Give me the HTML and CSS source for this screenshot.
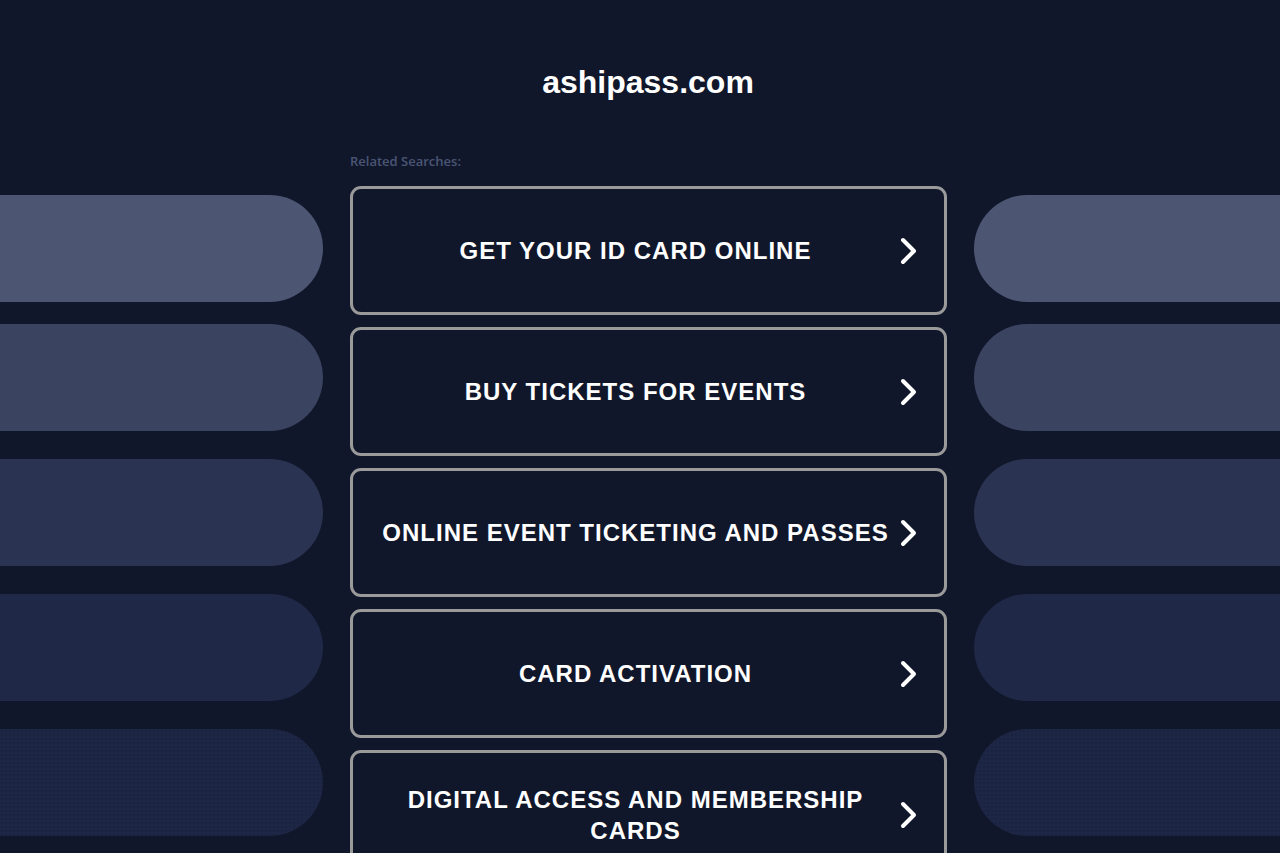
FILE: index.html
```html
<!DOCTYPE html>
<html lang="en">
<head>
<meta charset="utf-8">
<title>ashipass.com</title>
<link rel="stylesheet" href="styles.css">
</head>
<body>
<header class="header">
  <h1 class="domain">ashipass.com</h1>
</header>
<div class="layout">
  <div class="deco deco-left">
    <div class="pill pill-1"></div>
    <div class="pill pill-2"></div>
    <div class="pill pill-3"></div>
    <div class="pill pill-4"></div>
    <div class="pill pill-5"></div>
  </div>
  <main class="main">
    <div class="label">Related Searches:</div>
    <div class="links">
      <a class="link" href="#"><span class="link-text">GET YOUR ID CARD ONLINE</span><svg class="chev" viewBox="0 0 20 28" width="20" height="28"><polyline points="5,3 16,14 5,25" fill="none" stroke="#fff" stroke-width="4" stroke-linecap="round" stroke-linejoin="round"/></svg></a>
      <a class="link" href="#"><span class="link-text">BUY TICKETS FOR EVENTS</span><svg class="chev" viewBox="0 0 20 28" width="20" height="28"><polyline points="5,3 16,14 5,25" fill="none" stroke="#fff" stroke-width="4" stroke-linecap="round" stroke-linejoin="round"/></svg></a>
      <a class="link" href="#"><span class="link-text">ONLINE EVENT TICKETING AND PASSES</span><svg class="chev" viewBox="0 0 20 28" width="20" height="28"><polyline points="5,3 16,14 5,25" fill="none" stroke="#fff" stroke-width="4" stroke-linecap="round" stroke-linejoin="round"/></svg></a>
      <a class="link" href="#"><span class="link-text">CARD ACTIVATION</span><svg class="chev" viewBox="0 0 20 28" width="20" height="28"><polyline points="5,3 16,14 5,25" fill="none" stroke="#fff" stroke-width="4" stroke-linecap="round" stroke-linejoin="round"/></svg></a>
      <a class="link" href="#"><span class="link-text">DIGITAL ACCESS AND MEMBERSHIP CARDS</span><svg class="chev" viewBox="0 0 20 28" width="20" height="28"><polyline points="5,3 16,14 5,25" fill="none" stroke="#fff" stroke-width="4" stroke-linecap="round" stroke-linejoin="round"/></svg></a>
    </div>
  </main>
  <div class="deco deco-right">
    <div class="pill pill-1"></div>
    <div class="pill pill-2"></div>
    <div class="pill pill-3"></div>
    <div class="pill pill-4"></div>
    <div class="pill pill-5"></div>
  </div>
</div>
</body>
</html>
```

FILE: styles.css
```css
html, body {
  margin: 0;
  padding: 0;
  background: #11172b;
  overflow: hidden;
}

body {
  font-family: "Liberation Sans", Arial, sans-serif;
  color: #fff;
  height: 853px;
}

.header {
  padding-top: 64px;
  padding-left: 16px;
}

.domain {
  margin: 0;
  text-align: center;
  font-size: 32px;
  line-height: 36px;
  font-weight: bold;
  color: #fff;
}

.layout {
  display: flex;
  margin-top: 50px;
}

.deco {
  display: flex;
  flex-direction: column;
  gap: 28px;
  padding-top: 45px;
}

.deco-left {
  width: 323px;
  flex: none;
  margin-right: 27px;
}

.deco-right {
  flex: 1;
  margin-left: 27px;
  margin-right: -40px;
}

.pill {
  height: 107px;
  flex: none;
}

.deco-left .pill {
  border-radius: 0 54px 54px 0;
}

.deco-right .pill {
  border-radius: 54px 0 0 54px;
}

.pill-1 {
  background: #4c5673;
  margin-bottom: -6px;
}

.pill-2 {
  background: #3a4360;
}

.pill-3 {
  background: #2b3352;
}

.pill-4 {
  background: #1f2847;
}

.pill-5 {
  background-color: #1d2645;
  background-image: radial-gradient(circle, rgba(12, 18, 40, 0.35) 0.6px, transparent 0.9px);
  background-size: 4px 4px;
}

.main {
  width: 597px;
  flex: none;
}

.label {
  font-family: "Open Sans", "Liberation Sans", sans-serif;
  font-size: 13px;
  font-weight: 600;
  line-height: 20px;
  color: #4a5574;
  margin-top: 1px;
  margin-bottom: 15px;
}

.links {
  display: flex;
  flex-direction: column;
  gap: 12px;
}

.link {
  box-sizing: border-box;
  height: 129px;
  flex: none;
  border: 3px solid #9a9a9a;
  border-radius: 11px;
  display: flex;
  align-items: center;
  gap: 7px;
  padding: 0 26px 0 27px;
  text-decoration: none;
  color: #fff;
}

.link-text {
  flex: 1;
  text-align: center;
  font-size: 24px;
  line-height: 31px;
  font-weight: bold;
  letter-spacing: 1px;
}

.chev {
  flex: none;
  display: block;
}
```
